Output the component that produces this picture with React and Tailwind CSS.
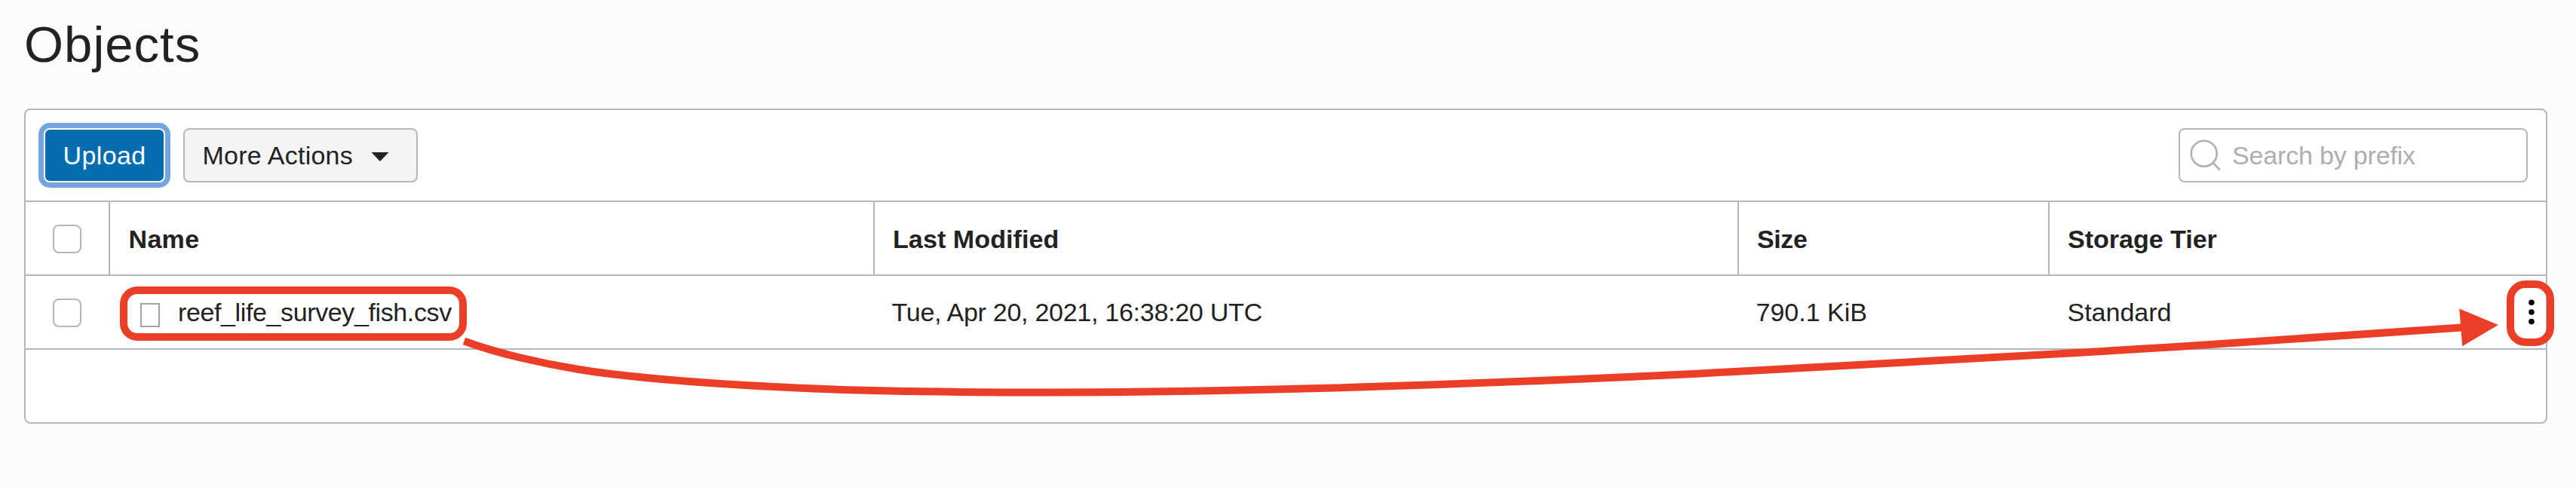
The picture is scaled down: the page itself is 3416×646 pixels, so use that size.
const COLS = "grid grid-cols-[112px_1014px_1146px_412px_1fr]";

function Checkbox() {
  return <span className="mt-0.5 block h-[38px] w-[38px] rounded-lg border-2 border-[#b1b8c2] bg-white" />;
}

function HeaderCell({ children, className = "" }) {
  return (
    <div className={`flex items-center border-[#b1b8c2] pt-[2px] text-[34px] leading-none font-bold ${className}`}>
      {children}
    </div>
  );
}

// Hand-drawn style callout: a curve from the file name to its row menu.
function Annotation() {
  return (
    <svg
      className="pointer-events-none absolute top-0 left-0"
      width="3416"
      height="646"
      viewBox="0 0 3416 646"
      fill="none"
      stroke="#ea3f26"
      strokeWidth="10"
    >
      <rect x="164" y="385" width="450" height="62" rx="18" />
      <rect x="3329" y="377" width="53" height="77" rx="20" />
      <path d="M615.5 452.5 C640.3 461.5 665.2 468.6 690 474.5 C730 483.9 770 491.2 810 496 C906.7 507.6 1003.3 512.6 1100 516.3 C1196.7 520 1293.3 520.4 1390 520.4 C1493.3 520.4 1596.7 518.8 1700 516.3 C1883.3 511.9 2066.7 504.5 2250 495.7 C2463.3 485.5 2676.7 472.9 2890 459.7 C3015 452 3140 443.3 3264 434.5" />
      <path d="M3261.3 409.5 L3313 431 L3265.2 459.2 Z" fill="#ea3f26" stroke="none" />
    </svg>
  );
}

export default function App() {
  return (
    <div className="relative h-[646px] w-[3416px] overflow-hidden bg-[#fcfcfc] px-8 font-['Liberation_Sans',Arial,sans-serif] text-[34px] leading-none text-[#222222]">
      <div className="flex h-[144px] items-start pt-[19px]">
        <h1 className="text-[67px] leading-[80px] tracking-[1px]">Objects</h1>
      </div>

      <section className="flex h-[418px] w-[3346px] flex-col rounded-lg border-2 border-[#b1b8c2] bg-white">
        <div className="flex h-[120px] shrink-0 items-start justify-between pt-6 pr-6 pl-6">
          <div className="flex gap-6">
            <button className="flex h-[72px] w-[161px] items-center justify-center rounded-lg border-2 border-white bg-[#026daf] tracking-[0.38px] text-white ring-[7px] ring-[#74a5e0]">
              Upload
            </button>
            <button className="flex h-[72px] w-[311px] items-center rounded-lg border-2 border-[#b1b8c2] bg-[#f4f4f4] pl-[23.5px]">
              <span className="tracking-[0.25px]">More Actions</span>
              <svg className="mt-[3px] ml-[24px]" width="24" height="12" viewBox="0 0 24 12" fill="#222222">
                <path d="M0.5 0 H23.5 L12 12 Z" />
              </svg>
            </button>
          </div>
          <div className="flex h-[72px] w-[463px] items-center rounded-lg border-2 border-[#b1b8c2] bg-white pl-[13px]">
            <svg width="42" height="42" viewBox="0 0 42 42" fill="none" stroke="#b0b0b0" strokeWidth="2.6">
              <circle cx="18.7" cy="18.7" r="17" />
              <path d="M30.5 31 L40 40.5" />
            </svg>
            <input
              className="ml-[14px] w-[380px] bg-transparent tracking-[-0.17px] outline-none placeholder:text-[#aeaeae] placeholder:opacity-100"
              placeholder="Search by prefix"
            />
          </div>
        </div>

        <div className={`${COLS} h-[100px] shrink-0 border-y-2 border-[#b1b8c2]`}>
          <div className="flex items-center border-r-2 border-[#b1b8c2] pl-9">
            <Checkbox />
          </div>
          <HeaderCell className="border-r-2 pl-[24.5px] tracking-[0.33px]">Name</HeaderCell>
          <HeaderCell className="border-r-2 pl-6 tracking-[0.1px]">Last Modified</HeaderCell>
          <HeaderCell className="border-r-2 pl-6 tracking-[-0.4px]">Size</HeaderCell>
          <HeaderCell className="pl-6">Storage Tier</HeaderCell>
        </div>

        <div className={`${COLS} h-[98px] shrink-0 border-b-2 border-[#b1b8c2]`}>
          <div className="flex items-center pl-9">
            <Checkbox />
          </div>
          <div className="flex items-center pl-10">
            <span className="mt-2 block h-8 w-[26px] border-2 border-[#a3a3a3]" />
            <span className="ml-[24px] tracking-[-0.38px]">reef_life_survey_fish.csv</span>
          </div>
          <div className="flex items-center pl-[22.5px] tracking-[-0.27px]">Tue, Apr 20, 2021, 16:38:20 UTC</div>
          <div className="flex items-center pl-[22.5px]">790.1 KiB</div>
          <div className="flex items-center justify-between pr-[15px] pl-[23.5px]">
            <span>Standard</span>
            <svg width="8" height="34" viewBox="0 0 8 34" fill="#000000">
              <circle cx="4" cy="4.3" r="3.8" />
              <circle cx="4" cy="17" r="3.8" />
              <circle cx="4" cy="29.6" r="3.8" />
            </svg>
          </div>
        </div>
      </section>

      <Annotation />
    </div>
  );
}
